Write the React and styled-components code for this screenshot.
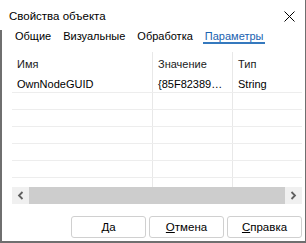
import React from 'react';
import styled, { createGlobalStyle } from 'styled-components';

const Global = createGlobalStyle`
  html, body { margin: 0; padding: 0; background: #fff; }
  body { font-family: "Liberation Sans", Arial, sans-serif; color: #000; }
  * { box-sizing: border-box; }
`;

const Window = styled.div`
  width: 306px;
  height: 243px;
  background: #fff;
  border-right: 1px solid #6f6f6f;
  border-bottom: 2px solid #6f6f6f;
  display: flex;
  flex-direction: column;
`;

const TitleBar = styled.div`
  height: 30px;
  padding: 2px 10px 0 9px;
  display: flex;
  align-items: center;
  justify-content: space-between;
  font-size: 11.5px;
`;

const Main = styled.div`
  flex: 1;
  display: flex;
  flex-direction: column;
  border-left: 2px solid #6f6f6f;
  padding: 0 3px 0 10px;
`;

const Tabs = styled.div`
  height: 14px;
  display: flex;
  gap: 8px;
  padding-left: 1px;
`;

const Tab = styled.div`
  height: 14px;
  padding: 0 2px;
  font-size: 11px;
  line-height: 12px;
  color: ${p => (p.$active ? '#1a62b0' : '#000')};
  border-bottom: 2px solid ${p => (p.$active ? '#3579be' : 'transparent')};
`;

const Grid = styled.div`
  margin-top: 8px;
  display: flex;
  flex-direction: column;
  font-size: 11px;
`;

const Row = styled.div`
  display: grid;
  grid-template-columns: 141px 80px 1fr;
  height: ${p => (p.$header ? '24px' : '17px')};
  border-bottom: ${p => (p.$header ? 'none' : '1px solid #ededed')};
`;

const Cell = styled.div`
  padding-left: 5px;
  display: flex;
  align-items: center;
  white-space: nowrap;
  overflow: hidden;
  border-right: ${p => (p.$last ? 'none' : '1px solid #e8e8e8')};
  color: ${p => (p.$header ? '#1a1a1a' : '#000')};
`;

const Body = styled.div`
  height: 111px;
  overflow: hidden;
`;

const Scrollbar = styled.div`
  height: 17px;
  display: flex;
  background: #f0f0f0;
`;

const Arrow = styled.div`
  width: 17px;
  height: 17px;
  display: flex;
  align-items: center;
  justify-content: center;
`;

const Thumb = styled.div`
  flex: 1;
  background: #cdcdcd;
`;

const Buttons = styled.div`
  margin-top: 12px;
  display: flex;
  justify-content: flex-end;
  gap: 3px;
`;

const Button = styled.button`
  width: 75px;
  height: 22px;
  border: 1px solid #d0d0d0;
  border-radius: 3px;
  background: #fff;
  font-family: inherit;
  font-size: 11.5px;
  color: #000;
  padding: 0;
`;

const Chevron = ({ dir }) => (
  <svg width="7" height="9" viewBox="0 0 7 9">
    <path
      d={dir === 'left' ? 'M5.5 1 L2 4.5 L5.5 8' : 'M1.5 1 L5 4.5 L1.5 8'}
      fill="none"
      stroke="#606060"
      strokeWidth="1.8"
    />
  </svg>
);

const rows = [
  ['OwnNodeGUID', '{85F82389…', 'String'],
  ['', '', ''],
  ['', '', ''],
  ['', '', ''],
  ['', '', ''],
  ['', '', ''],
  ['', '', ''],
];

export default function App() {
  return (
    <>
      <Global />
      <Window>
        <TitleBar>
          <span>Свойства объекта</span>
          <svg width="11" height="11" viewBox="0 0 11 11">
            <path d="M0.5 0.5 L10.5 10.5 M10.5 0.5 L0.5 10.5" stroke="#000" strokeWidth="1" />
          </svg>
        </TitleBar>
        <Main>
          <Tabs>
            <Tab>Общие</Tab>
            <Tab>Визуальные</Tab>
            <Tab>Обработка</Tab>
            <Tab $active>Параметры</Tab>
          </Tabs>
          <Grid>
            <Row $header>
              <Cell $header>Имя</Cell>
              <Cell $header>Значение</Cell>
              <Cell $header $last>Тип</Cell>
            </Row>
            <Body>
              {rows.map((r, i) => (
                <Row key={i}>
                  <Cell>{r[0]}</Cell>
                  <Cell>{r[1]}</Cell>
                  <Cell $last>{r[2]}</Cell>
                </Row>
              ))}
            </Body>
            <Scrollbar>
              <Arrow><Chevron dir="left" /></Arrow>
              <Thumb />
              <Arrow><Chevron dir="right" /></Arrow>
            </Scrollbar>
          </Grid>
          <Buttons>
            <Button>Да</Button>
            <Button><u>О</u>тмена</Button>
            <Button><u>С</u>правка</Button>
          </Buttons>
        </Main>
      </Window>
    </>
  );
}
